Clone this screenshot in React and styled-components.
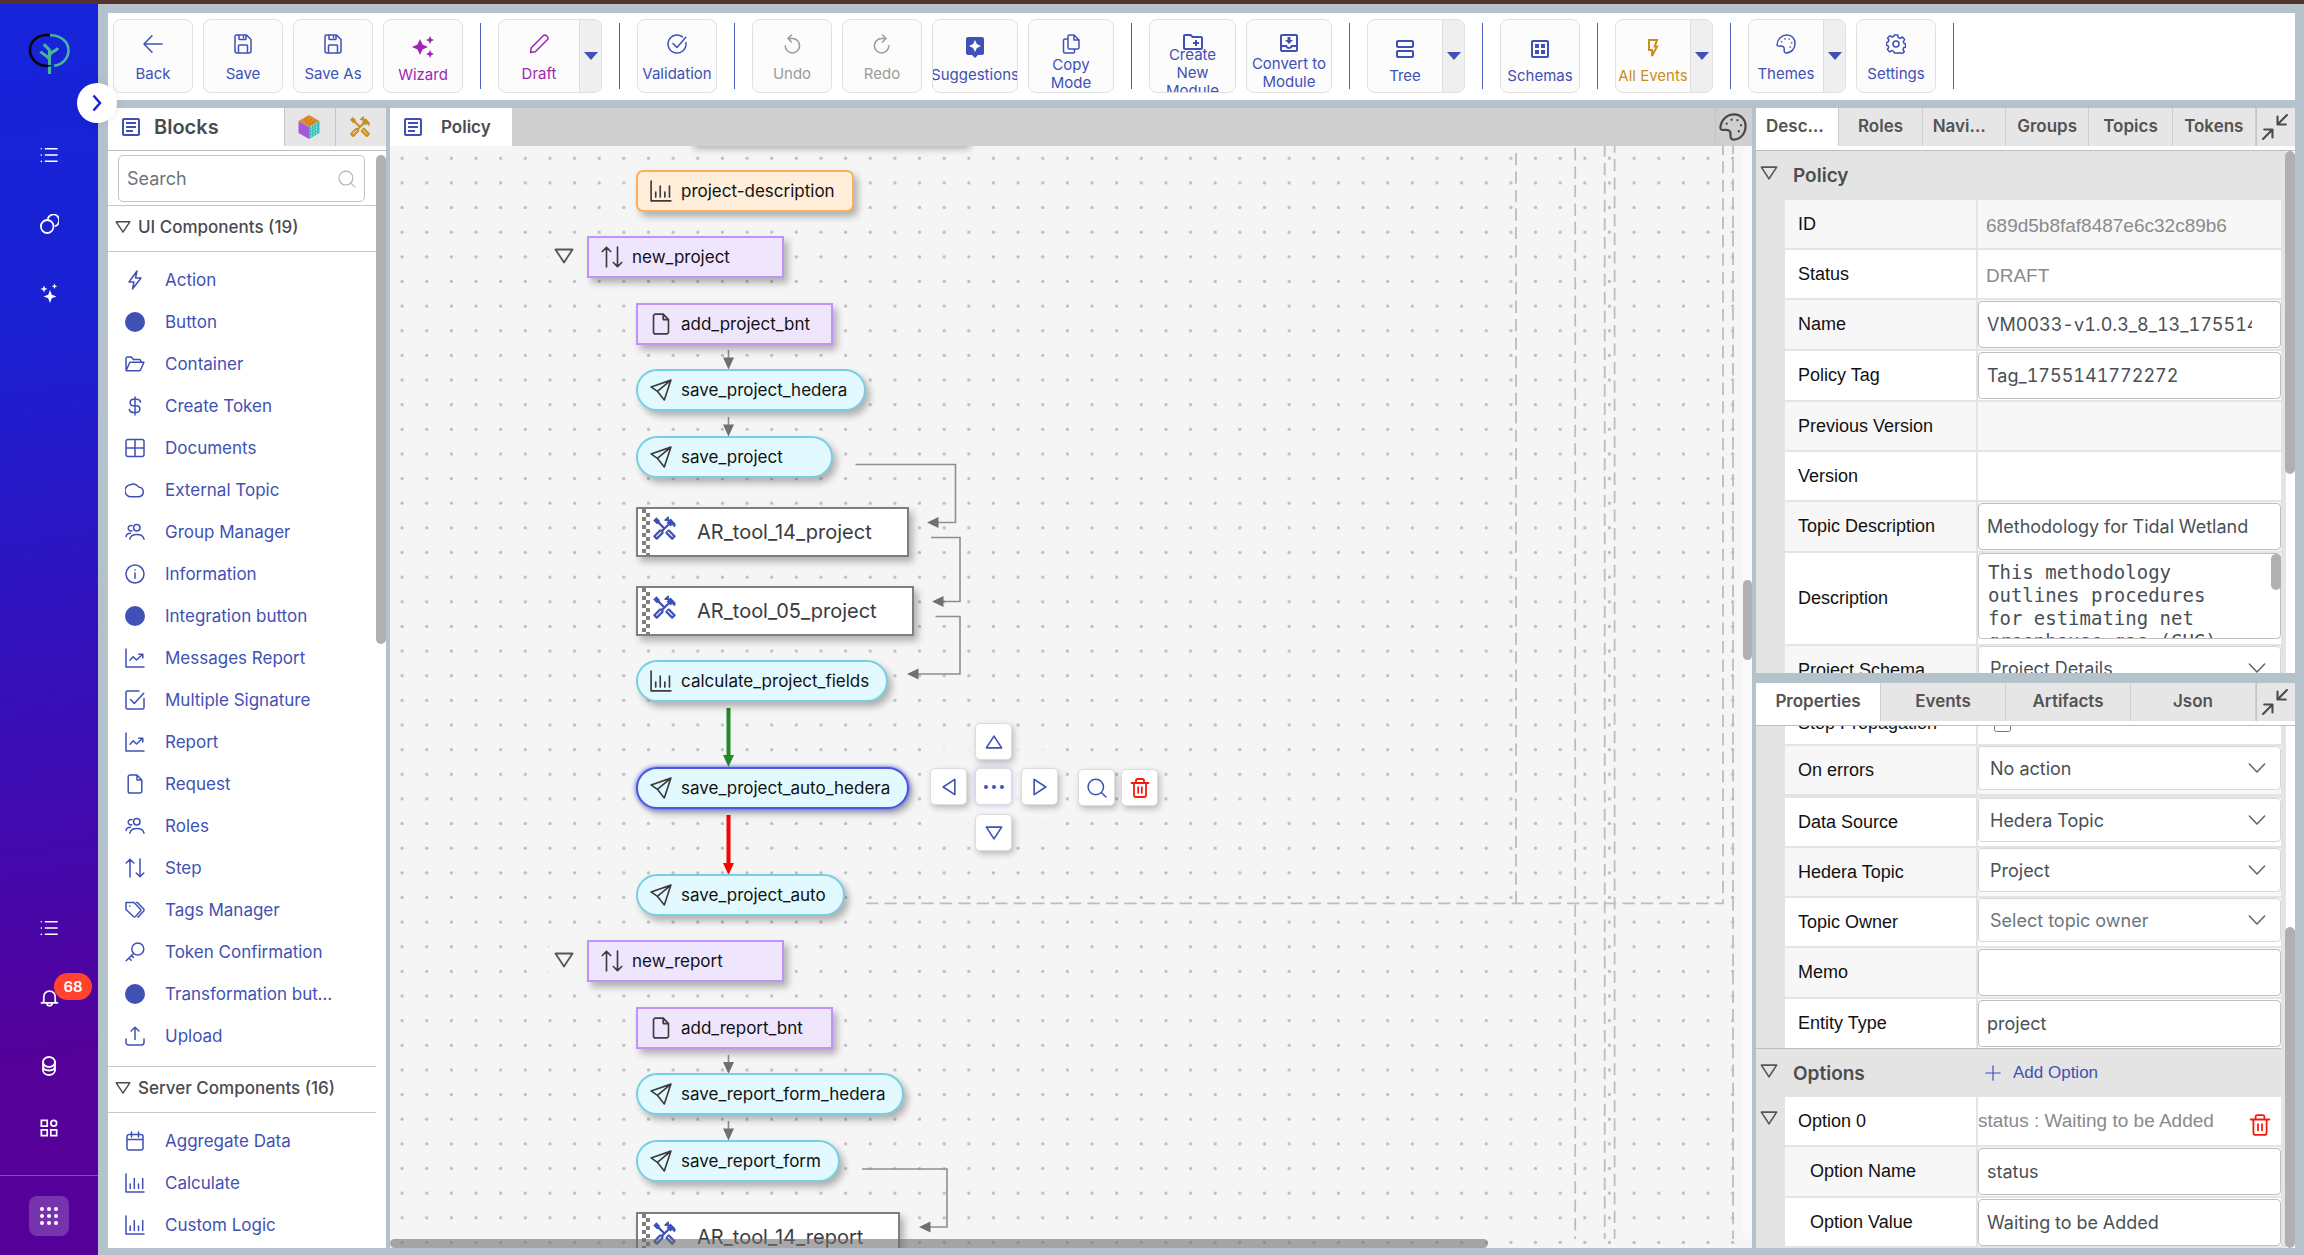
import React from "react"
import styled, { createGlobalStyle, css } from "styled-components"
import {
    MdAssistant,
    MdAutoAwesome,
    MdOutlineArticle,
    MdOutlineCreateNewFolder,
    MdOutlineDataset,
    MdOutlineHandyman,
    MdOutlineMoveToInbox,
    MdOutlineViewAgenda,
} from "react-icons/md"

const INDIGO = "#3f51b5"
const PURPLE = "#9c27b0"
const GOLD = "#c98f1c"
const RED = "#f51a0d"
const FRAME = "#b4c2cb"

const GlobalStyle = createGlobalStyle`
    * {
        box-sizing: border-box;
    }

    body {
        margin: 0;
        font-family: Inter, "Liberation Sans", sans-serif;
        font-size: 18px;
        color: #4a4b4f;
    }

    button,
    input,
    select {
        font-family: inherit;
    }

    button {
        padding: 0;
        border: 0;
        background: none;
        color: inherit;
        cursor: pointer;
    }

    svg {
        flex-shrink: 0;
        display: block;
    }
`

/* ---------- icons ---------- */

const Svg = ({ size = 20, width = 1.5, children, ...rest }) => (
    <svg
        width={size}
        height={size}
        viewBox="0 0 20 20"
        fill="none"
        stroke="currentColor"
        strokeWidth={width}
        strokeLinecap="round"
        strokeLinejoin="round"
        aria-hidden="true"
        {...rest}>
        {children}
    </svg>
)

const paths = {
    back: "M19 10H1.2M9 1.8L1 10l8 8.2",
    save: "M3.500 1h10L18 5.500V17a2 2 0 0 1-2 2H4a2 2 0 0 1-2-2V2.500A1.500 1.500 0 0 1 3.500 1M6 1v4a.6.6 0 0 0 .6.6h5.800a.6.6 0 0 0 .6-.6V1M10.500 2.400v1.400M5.500 19v-7.200a.8.8 0 0 1 .8-.8h7.400a.8.8 0 0 1 .8.8V19",
    pencil: "M1.500 18.500l.8-4.800L14.200 1.700a2.300 2.300 0 0 1 3.300 0l.8.8a2.300 2.300 0 0 1 0 3.300L6.300 17.700z",
    check: "M15.500 2.900A9 9 0 1 0 19 10V8.600M6 9.500l4 4L18.800 3.200",
    undo: "M6.800 4.500h3.700a7.200 7.200 0 1 1-7.300 7.200M9.500 1L6 4.500 9.500 8",
    redo: "M13.200 4.500H9.500a7.200 7.200 0 1 0 7.300 7.200M10.500 1L14 4.500 10.500 8",
    copy: "M13 1H8.500A1.500 1.500 0 0 0 7 2.500v11A1.500 1.500 0 0 0 8.500 15h8a1.500 1.500 0 0 0 1.500-1.500V6zM13 1v5h5M7 5H4a1.500 1.500 0 0 0-1.500 1.500v11A1.500 1.500 0 0 0 4 19h8a1.500 1.500 0 0 0 1.500-1.500V15",
    cog: "M8.300 1h3.400l.5 2.500 2 .9 2.200-1.400 2.300 2.400-1.400 2.200.8 1.900 1.400.3v3.400l-1.700.4-.8 1.900 1.300 2.100-2.400 2.300-2-1.300-2 .8L11.500 19H8.300l-.5-1.600-2-.8-2.100 1.300-2.300-2.400 1.300-2.100-.8-1.900L.5 11.200V8.400l1.600-.5.8-1.900L1.600 4l2.300-2.300L6 3l1.800-.8z",
    bolt: "M12 1L4 12h5l-1.500 7L16 8h-5.500z",
    folder: "M1 16V4.500A1.500 1.500 0 0 1 2.500 3h3.800l2 2.500h6A1.500 1.500 0 0 1 15.800 7v1.200M1.300 16.300L4.500 9a1.300 1.300 0 0 1 1.200-.8h13.200l-3.200 7.500a1.500 1.500 0 0 1-1.400 1H2A1 1 0 0 1 1 16",
    dollar: "M10 1v18M15.500 6.200c-.3-2-2-3-4-3H8.500a3.200 3.200 0 0 0 0 6.600h3a3.300 3.300 0 0 1 0 6.700h-3c-2.200 0-3.800-1-4.200-3",
    table: "M3 1.500h14a2 2 0 0 1 2 2v13a2 2 0 0 1-2 2H3a2 2 0 0 1-2-2v-13a2 2 0 0 1 2-2zM1 10h18M10 1.500v17",
    cloud: "M6.500 16.700A5.500 5.500 0 0 1 5.300 4.800 6 6 0 0 1 13.500 7a4.900 4.900 0 0 1 .8 9.700z",
    users: "M15 5.700a3.200 3.200 0 1 1-6.400 0 3.200 3.200 0 0 1 6.400 0zM4.800 17.200a7.200 5.500 0 0 1 14.200 0M7 3.800a2.700 2.700 0 1 0-.2 5M1 14.500a4.500 4 0 0 1 4.500-3.300",
    info: "M19 10a9 9 0 1 1-18 0 9 9 0 0 1 18 0zM10 9v5.200M10 5.800v.3",
    report: "M1 1v18h18M5 12.300l3.200-3.500L11.500 12l6-5.500M13.800 6.200h4V10",
    multi: "M14 1H2.500A1.500 1.500 0 0 0 1 2.500v15A1.500 1.500 0 0 0 2.500 19h15a1.500 1.500 0 0 0 1.500-1.500V8.500M5.500 9.500l3.800 4L18.700 3.200",
    file: "M12 1H5a1.800 1.800 0 0 0-1.800 1.800v14.400A1.800 1.800 0 0 0 5 19h10a1.800 1.800 0 0 0 1.800-1.800V6zM12 1v5h4.800",
    step: "M5 19V1.200M1.200 5L5 1.200 8.800 5M15 1v17.800M11.200 15l3.800 3.800 3.800-3.800",
    tags: "M1 2.500h8l6.500 6.800a1.500 1.500 0 0 1 0 1.800l-5 5.400a1.500 1.500 0 0 1-2 0L1 9.500zM11.500 2.500h1l6.200 6.600a1.500 1.500 0 0 1 0 1.900l-5.700 6.300M4.800 6v.2",
    key: "M18.800 7a6 6 0 1 1-12 0 6 6 0 0 1 12 0zM8.700 11.200L1.200 18.800M4 16l2.200 2.200M6.500 13.600l1.800 1.800",
    upload: "M10 13.500V1.200M6 5l4-3.800L14 5M1 13v3.500A2.500 2.500 0 0 0 3.500 19h13a2.500 2.500 0 0 0 2.500-2.500V13",
    calendar: "M4 3.500h12a2 2 0 0 1 2 2V17a2 2 0 0 1-2 2H4a2 2 0 0 1-2-2V5.500a2 2 0 0 1 2-2zM2 8.500h16M6.500 1v5M13.500 1v5",
    chart: "M1 1v18h18M5.200 11v4.500M9.300 5.500v10M13.500 11v4.500M17.700 5.500v10",
    send: "M19 1L1 7.200l5.700 4L13 19zM19 1L6.700 11.200v0",
    search: "M16.500 9A7.700 7.700 0 1 1 1.100 9a7.700 7.700 0 0 1 15.400 0zM14.300 14.500L19 19",
    trash: "M1.500 5h17M4 5v12a2 2 0 0 0 2 2h8a2 2 0 0 0 2-2V5M6 5V2.500A1.500 1.500 0 0 1 7.500 1h5A1.500 1.500 0 0 1 14 2.500V5M8.200 9.200v5.600M11.800 9.200v5.600",
    chevron: "M1.500 5.500L10 14.500l8.500-9",
    plus: "M10 1v18M1 10h18",
    bell: "M4 14.500V9.200a6 6 0 0 1 12 0v5.300l2.500 1.200H1.500zM7.300 16a2.700 2.700 0 0 0 5.400 0",
    rings: "M14.500 12.500a6.300 6.500 0 1 1-12.600 0 6.300 6.500 0 0 1 12.600 0zM9 4.200a5.800 6 0 1 1 7.600 7.800",
    compress: "M18.500 1.500l-6.500 6.500M11.800 2.500v5.700h5.900M1.500 18.500l6.500-6.500M2.300 11.800h5.900v5.700",
    palette: "M11 1C5.500 1 1.500 5 1 10.500c0 1.300 1.200 1.800 2.600 1.600 3-.5 5 .6 4.600 3.700-.2 1.800.6 3.300 2.300 3.200C16 18.700 19 14 19 9.200 19 4.500 15.500 1 11 1zM5.500 7.500v.2M9 4.700v.2M13.200 5v.2M15.700 8.700v.2M14.200 13v.2",
}

const Icon = ({ name, ...rest }) => {
    if (name === "circle")
        return (
            <Svg {...rest}>
                <circle cx="10" cy="10" r="10" fill="currentColor" stroke="none" />
            </Svg>
        )
    return (
        <Svg {...rest}>
            <path d={paths[name]} />
            {name === "cog" && <circle cx="10" cy="10" r="3" />}
        </Svg>
    )
}

const Triangle = ({ size = 20, turn = 0 }) => (
    <Svg size={size} width={1.8}>
        <path d="M1.500 3.500h17L10 16.500z" transform={`rotate(${turn} 10 10)`} />
    </Svg>
)

const FlashIcon = ({ size }) => (
    <svg
        width={size}
        height={size}
        viewBox="0 0 24 24"
        fill="none"
        stroke="currentColor"
        strokeWidth="2"
        aria-hidden="true">
        <path d="M8 3h8l-2.300 6.500H16L11 19v-6H8z" />
    </svg>
)

const ListIcon = () => (
    <Svg size={18} width={1.8}>
        <path d="M6 3h13M6 10h13M6 17h13M1.500 3v.1M1.500 10v.1M1.500 17v.1" />
    </Svg>
)

const SparkleIcon = () => (
    <svg width="20" height="20" viewBox="0 0 20 20" fill="#fff" aria-hidden="true">
        <path d="M11 7l1.800 4.700L17.500 13.500l-4.700 1.800L11 20l-1.800-4.700L4.500 13.500l4.700-1.800z" />
        <path d="M5 2.500l1 2.500L8.500 6 6 7 5 9.500 4 7 1.500 6 4 5zM15.500.5l.8 2 2 .8-2 .8-.8 2-.8-2-2-.8 2-.8z" />
    </svg>
)

const DatabaseIcon = () => (
    <Svg size={20} width={1.8}>
        <ellipse cx="10" cy="6" rx="6" ry="5" />
        <path d="M4 6v8c0 3 2.700 5 6 5s6-2 6-5V6M4 10c0 3 2.700 4.500 6 4.500s6-1.500 6-4.500" />
    </Svg>
)

const SquaresIcon = () => (
    <Svg size={18} width={1.9} strokeLinejoin="miter">
        <path d="M1.500 1.500h6.500V8H1.500zM1.500 12h6.500v6.500H1.500zM12 12h6.500v6.500H12z" />
        <circle cx="15.300" cy="4.700" r="3.200" />
    </Svg>
)

const AppsIcon = () => (
    <svg width="18" height="18" viewBox="0 0 18 18" fill="#fff" aria-hidden="true">
        {[2, 9, 16].map(y =>
            [2, 9, 16].map(x => <circle key={`${x}-${y}`} cx={x} cy={y} r="2" />),
        )}
    </svg>
)

const Logo = () => (
    <svg width="42" height="42" viewBox="0 0 42 42" fill="none" aria-hidden="true">
        <path d="M22 2.200C10 1 2 8 2 17s8 17 20 15.800" stroke="#05060c" strokeWidth="2.600" />
        <path
            d="M22 2.200C33 2 40.500 9 40.500 17.500c0 7.500-6 14.200-14.500 15.300"
            stroke="#47b59b"
            strokeWidth="2.600"
        />
        <path
            d="M21.500 32V18c0-3-3.500-3-5.500-7M21.500 27c-1-5-7-5-9-8.500M22 22c1-4 6-3.500 8-7"
            stroke="#47b59b"
            strokeWidth="3"
        />
        <path d="M21.500 33.500V41" stroke="#47b59b" strokeWidth="3.200" />
    </svg>
)

const CubeIcon = () => (
    <svg width="22" height="24" viewBox="0 0 22 24" aria-hidden="true">
        <path d="M11 0l10.500 6L11 12 .5 6z" fill="#e08a2c" />
        <path d="M.5 6L11 12v12L.5 18z" fill="#9f5bdc" />
        <path d="M21.500 6L11 12v12l10.500-6z" fill="#3fc0bd" />
        <path d="M13.500 11v11M16 9.500v11M18.500 8v11" stroke="#8fe3dc" strokeDasharray="2 1" />
        <path d="M6 5.500l5-3M8 7.500l6-3.500M11 9.500l6-3.500" stroke="#c46a10" strokeDasharray="2 1" />
    </svg>
)

/* ---------- frame ---------- */

const Page = styled.div`
    display: flex;
    flex-direction: column;
    height: 100vh;
    overflow: hidden;
    border-top: 4px solid #54332f;
`

const Body = styled.div`
    display: flex;
    flex: 1;
    min-height: 0;
`

const Main = styled.main`
    display: flex;
    flex: 1;
    flex-direction: column;
    gap: 8px;
    min-width: 0;
    padding: 9px 9px 7px 10px;
    background: ${FRAME};
`

const Sidebar = styled.nav`
    position: relative;
    display: flex;
    flex-direction: column;
    align-items: center;
    width: 98px;
    padding-top: 29px;
    color: #fff;
    background: linear-gradient(
        170deg,
        #1624da 0%,
        #1b20d3 26%,
        #4209ae 66%,
        #540099 84%
    );
`

const SideItems = styled.div`
    display: flex;
    flex-direction: column;
    align-items: center;
    gap: ${props => props.$gap}px;
    margin-top: ${props => props.$top};
`

const SideButton = styled.button`
    position: relative;
    display: grid;
    place-items: center;
    width: 40px;
    height: ${props => (props.$tall ? 34 : 20)}px;
`

const FooterGap = styled.div`
    height: 37px;
`

const SideFooter = styled.div`
    display: flex;
    justify-content: center;
    width: 100%;
    height: 80px;
    padding-top: 20px;
    border-top: 1px solid rgba(255, 255, 255, 0.3);
`

const AppsButton = styled.button`
    display: grid;
    place-items: center;
    width: 40px;
    height: 40px;
    border-radius: 8px;
    background: rgba(255, 255, 255, 0.2);
`

const Badge = styled.span`
    position: absolute;
    left: 25px;
    bottom: 14px;
    width: 38px;
    border-radius: 14px;
    background: #ff432e;
    font-size: 15px;
    font-weight: 600;
    line-height: 27px;
    text-align: center;
`

const Expander = styled.button`
    position: absolute;
    z-index: 2;
    top: 79px;
    left: 77px;
    display: grid;
    place-items: center;
    width: 40px;
    height: 40px;
    border-radius: 50%;
    background: #fff;
    color: #1a24d8;
    box-shadow: 0 0 12px rgba(0, 0, 0, 0.08);
`

/* ---------- toolbar ---------- */

const Bar = styled.header`
    display: flex;
    align-items: flex-start;
    gap: 10px;
    height: 87px;
    padding: 6px 5px;
    background: #fff;
`

const Divider = styled.i`
    width: 1px;
    height: 66px;
    margin: 4px 7px 0;
    background: #5063c4;
`

const toolFrame = css`
    height: 74px;
    border: 1px solid #e0e0e0;
    border-radius: 8px;
    background: #fcfcfc;
    overflow: hidden;
`

const ToolButton = styled.button`
    ${props => !props.$bare && toolFrame}
    display: flex;
    flex-direction: column;
    align-items: center;
    width: ${props => props.$width || 80}px;
    padding-top: ${props => props.$top}px;
    color: ${props => props.$color || INDIGO};
    font-size: 15px;
    line-height: 18px;

    svg {
        margin-bottom: ${props => props.$gap}px;
    }
`

const Split = styled.div`
    ${toolFrame}
    display: flex;
    width: ${props => props.$width}px;

    ${ToolButton} {
        flex: 1;
    }
`

const Caret = styled.button`
    display: grid;
    place-items: center;
    width: 22px;
    border-left: 1px solid #dcdcdc;
    background: #efefef;
    color: ${INDIGO};
`

const ToolLabel = styled.span`
    max-width: ${props => (props.$narrow ? "60px" : "none")};
    white-space: ${props => (props.$oneLine ? "nowrap" : "normal")};
    text-align: center;
`

// pi: thin 20px icons, md: material 24px icons, low: material icons set a bit lower
const spots = {
    pi: { top: 14, gap: 11, size: 20 },
    piTall: { top: 14, gap: 2, size: 20 },
    md: { top: 15, gap: 7, size: 24 },
    low: { top: 17, gap: 6, size: 24 },
    two: { top: 11, gap: 0, size: 24 },
    three: { top: 10, gap: -8, size: 24 },
}

const tools = [
    [
        { label: "Back", icon: "back" },
        { label: "Save", icon: "save" },
        { label: "Save As", icon: "save" },
        { label: "Wizard", Md: MdAutoAwesome, spot: "md", color: PURPLE },
    ],
    [{ label: "Draft", icon: "pencil", color: PURPLE, split: 104 }],
    [{ label: "Validation", icon: "check" }],
    [
        { label: "Undo", icon: "undo", color: "#9b9b9b", disabled: true },
        { label: "Redo", icon: "redo", color: "#9b9b9b", disabled: true },
        { label: "Suggestions", Md: MdAssistant, spot: "md", width: 86 },
        { label: "Copy Mode", icon: "copy", spot: "piTall", width: 86, narrow: true },
    ],
    [
        {
            label: "Create New Module",
            Md: MdOutlineCreateNewFolder,
            spot: "three",
            width: 87,
            narrow: true,
        },
        {
            label: "Convert to Module",
            Md: MdOutlineMoveToInbox,
            spot: "two",
            width: 86,
        },
    ],
    [{ label: "Tree", Md: MdOutlineViewAgenda, spot: "low", split: 98 }],
    [{ label: "Schemas", Md: MdOutlineDataset, spot: "low" }],
    [{ label: "All Events", Md: FlashIcon, spot: "low", color: GOLD, split: 98 }],
    [
        { label: "Themes", icon: "palette", split: 98 },
        { label: "Settings", icon: "cog" },
    ],
]

const Tool = ({ tool }) => {
    const spot = spots[tool.spot || "pi"]
    const button = (
        <ToolButton
            $bare={Boolean(tool.split)}
            $width={tool.width}
            $top={spot.top}
            $gap={spot.gap}
            $color={tool.color}
            disabled={tool.disabled}>
            {tool.Md ? <tool.Md size={spot.size} /> : <Icon name={tool.icon} size={spot.size} />}
            <ToolLabel $narrow={tool.narrow} $oneLine={Boolean(tool.split)}>
                {tool.label}
            </ToolLabel>
        </ToolButton>
    )

    if (!tool.split) return button

    return (
        <Split $width={tool.split}>
            {button}
            <Caret aria-label={`${tool.label} menu`}>
                <svg width="14" height="8" viewBox="0 0 14 8" fill="currentColor">
                    <path d="M0 0h14L7 8z" />
                </svg>
            </Caret>
        </Split>
    )
}

/* ---------- panels ---------- */

const Workspace = styled.div`
    display: grid;
    grid-template-columns: 278px minmax(0, 1fr) 539px;
    gap: 4px;
    flex: 1;
    min-height: 0;
`

const Panel = styled.section`
    position: relative;
    display: flex;
    flex-direction: column;
    flex: 1;
    min-width: 0;
    min-height: 0;
    background: #fff;
    overflow: hidden;
`

const Tabs = styled.div`
    display: flex;
    flex-shrink: 0;
    height: 38px;
    background: ${props => props.$bg || "#e6e6e6"};
`

const Tab = styled.button`
    flex: 1 1 0;
    min-width: 0;
    padding: 0 10px 2px;
    border-right: 1px solid #cdcdcd;
    background: ${props => (props.$active ? "#fff" : "transparent")};
    color: #535353;
    font-size: 17px;
    font-weight: 600;
    white-space: nowrap;
    overflow: hidden;
    text-overflow: ellipsis;
`

const IconTab = styled.button`
    display: grid;
    place-items: center;
    width: ${props => props.$width}px;
    padding-right: 2px;
    border-left: 1px solid #c4c4c4;
    color: ${props => props.$color || "#4a4a4a"};
`

const TitleTab = styled.h2`
    display: flex;
    align-items: center;
    gap: ${props => props.$gap}px;
    flex: ${props => props.$flex || "none"};
    margin: 0;
    padding: 0 21px 0 11px;
    background: #fff;
    font-size: ${props => props.$size}px;
    font-weight: 600;

    svg {
        color: ${INDIGO};
    }
`

const TabsLine = styled.div`
    flex-shrink: 0;
    height: 5px;
    border-bottom: 1px solid #bdbdbd;
    background: #fff;
`

const Thumb = styled.i`
    position: absolute;
    right: 0;
    top: ${props => props.$top};
    bottom: ${props => props.$bottom || "auto"};
    width: ${props => props.$width || 10}px;
    height: ${props => props.$height || "auto"};
    border-radius: 5px;
    background: #b0b0b0;
`

const SearchBox = styled.label`
    display: flex;
    align-items: center;
    flex-shrink: 0;
    height: 47px;
    margin: 4px 21px 3px 10px;
    padding: 0 8px;
    border: 1px solid #c4c4c4;
    border-radius: 5px;
    color: #b3b3b3;

    input {
        flex: 1;
        min-width: 0;
        padding: 0;
        border: 0;
        outline: 0;
        font-size: 18px;
    }

    input::placeholder {
        color: #6c757d;
        opacity: 1;
    }
`

const GroupTitle = styled.h3`
    display: flex;
    align-items: center;
    flex-shrink: 0;
    gap: 7px;
    height: 47px;
    margin: 0 10px 0 0;
    padding: 0 0 3px 7px;
    border-top: 1px solid #c8c8c8;
    border-bottom: 1px solid #c8c8c8;
    font-size: 17px;
    font-weight: 500;
`

const BlockList = styled.ul`
    flex-shrink: 0;
    margin: 0;
    padding: 7px 52px 9px 17px;
    list-style: none;
`

const BlockItem = styled.li`
    display: flex;
    align-items: center;
    gap: 20px;
    height: 42px;
    color: ${INDIGO};
    font-size: 17px;

    span {
        overflow: hidden;
        text-overflow: ellipsis;
        white-space: nowrap;
    }
`

const uiBlocks = [
    ["bolt", "Action"],
    ["circle", "Button"],
    ["folder", "Container"],
    ["dollar", "Create Token"],
    ["table", "Documents"],
    ["cloud", "External Topic"],
    ["users", "Group Manager"],
    ["info", "Information"],
    ["circle", "Integration button"],
    ["report", "Messages Report"],
    ["multi", "Multiple Signature"],
    ["report", "Report"],
    ["file", "Request"],
    ["users", "Roles"],
    ["step", "Step"],
    ["tags", "Tags Manager"],
    ["key", "Token Confirmation"],
    ["circle", "Transformation button"],
    ["upload", "Upload"],
]

const serverBlocks = [
    ["calendar", "Aggregate Data"],
    ["chart", "Calculate"],
    ["chart", "Custom Logic"],
]

const BlockGroup = ({ title, blocks }) => (
    <>
        <GroupTitle>
            <Triangle size={16} />
            {title}
        </GroupTitle>
        <BlockList>
            {blocks.map(([icon, label]) => (
                <BlockItem key={label}>
                    <Icon name={icon} size={20} />
                    <span>{label}</span>
                </BlockItem>
            ))}
        </BlockList>
    </>
)

const BlocksPanel = () => (
    <Panel>
        <Tabs>
            <TitleTab $flex="1" $gap={11} $size={20}>
                <MdOutlineArticle size={24} />
                Blocks
            </TitleTab>
            <IconTab $width={51} aria-label="Modules">
                <CubeIcon />
            </IconTab>
            <IconTab $width={51} $color={GOLD} aria-label="Tools">
                <MdOutlineHandyman size={24} />
            </IconTab>
        </Tabs>
        <TabsLine />
        <SearchBox>
            <input type="text" placeholder="Search" aria-label="Search" />
            <Icon name="search" size={18} width={1.3} />
        </SearchBox>
        <BlockGroup title="UI Components (19)" blocks={uiBlocks} />
        <BlockGroup title="Server Components (16)" blocks={serverBlocks} />
        <Thumb $top="47px" $height="489px" />
    </Panel>
)

/* ---------- canvas ---------- */

const Spacer = styled.div`
    flex: 1;
`

const Canvas = styled.div`
    position: relative;
    flex: 1;
    background: #f5f5f5;
    overflow: hidden;
`

const Drawing = styled.svg`
    position: absolute;
    inset: 0;
    width: 100%;
    height: 100%;
`

const kinds = {
    action: css`
        border-color: #78cfe4;
        border-radius: 21px;
        background: #e2f9ff;
    `,
    step: css`
        border-color: #c093f8;
        background: #efe5fd;
    `,
    info: css`
        border-color: #fab05c;
        border-radius: 7px;
        background: #ffeeda;
    `,
    tool: css`
        gap: 19px;
        height: 50px;
        padding: 0 35px 0 13px;
        border-color: #7f7f7f;
        background: #fff;
        color: #3b3b3e;
        font-size: 20px;
    `,
}

const Node = styled.div.attrs(props => ({
    style: { left: props.$x, top: props.$y },
}))`
    position: absolute;
    display: flex;
    align-items: center;
    gap: 9px;
    min-width: 197px;
    height: 42px;
    padding: 0 17px 0 12px;
    border: 2px solid;
    color: #111;
    font-size: 17px;
    white-space: nowrap;
    box-shadow: 4px 5px 7px rgba(0, 0, 0, 0.28);
    ${props => kinds[props.$kind]}
    ${props =>
        props.$selected &&
        css`
            border-color: #4b57dd;
            box-shadow:
                0 0 5px #4b57dd,
                4px 5px 7px rgba(0, 0, 0, 0.28);
        `}

    > svg {
        color: ${props => (props.$kind === "tool" ? INDIGO : "#3c3c3c")};
        margin-bottom: ${props => (props.$kind === "tool" ? 8 : 0)}px;
    }
`

const Checker = styled.i`
    position: absolute;
    top: 0;
    bottom: 0;
    left: 4px;
    width: 8px;
    background: conic-gradient(#fff 25%, #808080 0 50%, #fff 0 75%, #808080 0) 0 0 / 8px 8px;
`

const Fold = styled.button.attrs(props => ({
    style: { left: props.$x, top: props.$y },
}))`
    position: absolute;
    display: grid;
    place-items: center;
    width: 30px;
    height: 30px;
    background: #f5f5f5;
    color: #555;
`

const Halo = styled.i`
    position: absolute;
    left: 540px;
    top: 577px;
    width: 128px;
    height: 128px;
    border-radius: 50%;
    background: rgba(245, 245, 245, 0.85);
`

const PadButton = styled.button.attrs(props => ({
    style: { left: props.$x, top: props.$y },
}))`
    position: absolute;
    display: grid;
    place-items: center;
    width: 37px;
    height: 37px;
    border: 1px solid #dcdcdc;
    border-radius: 5px;
    background: #fff;
    color: ${props => props.$color || INDIGO};
    box-shadow: ${props =>
        props.$glow ? "0 0 5px rgba(63, 81, 220, 0.35)" : "2px 3px 6px rgba(0, 0, 0, 0.24)"};
`

const Peek = styled.i`
    position: absolute;
    top: -44px;
    left: 300px;
    width: 276px;
    height: 42px;
    background: #fff;
    box-shadow: 4px 5px 7px rgba(0, 0, 0, 0.28);
`

const HScroll = styled.i`
    position: absolute;
    left: 0;
    right: 264px;
    bottom: 0;
    height: 9px;
    border-radius: 5px;
    background: rgba(110, 110, 110, 0.6);
`

const VScroll = styled.i`
    position: absolute;
    top: 0;
    right: 0;
    bottom: 9px;
    width: 9px;
    background: #f9f9f9;
`

const nodes = [
    { x: 246, y: 24, kind: "info", icon: "chart", label: "project-description" },
    { x: 197, y: 90, kind: "step", icon: "step", label: "new_project" },
    { x: 246, y: 157, kind: "step", icon: "file", label: "add_project_bnt" },
    { x: 246, y: 223, kind: "action", icon: "send", label: "save_project_hedera" },
    { x: 246, y: 290, kind: "action", icon: "send", label: "save_project" },
    { x: 246, y: 361, kind: "tool", label: "AR_tool_14_project" },
    { x: 246, y: 440, kind: "tool", label: "AR_tool_05_project" },
    { x: 246, y: 514, kind: "action", icon: "chart", label: "calculate_project_fields" },
    {
        x: 246,
        y: 621,
        kind: "action",
        icon: "send",
        label: "save_project_auto_hedera",
        selected: true,
    },
    { x: 246, y: 728, kind: "action", icon: "send", label: "save_project_auto" },
    { x: 197, y: 794, kind: "step", icon: "step", label: "new_report" },
    { x: 246, y: 861, kind: "step", icon: "file", label: "add_report_bnt" },
    { x: 246, y: 927, kind: "action", icon: "send", label: "save_report_form_hedera" },
    { x: 246, y: 994, kind: "action", icon: "send", label: "save_report_form" },
    { x: 246, y: 1066, kind: "tool", label: "AR_tool_14_report" },
]

const Arrows = () => (
    <Drawing aria-hidden="true">
        <defs>
            <pattern
                id="dots"
                x="-0.2"
                y="0"
                width="24.640"
                height="24.640"
                patternUnits="userSpaceOnUse">
                <circle cx="12.300" cy="12.300" r="1.600" fill="#bcbcbc" />
            </pattern>
        </defs>
        <rect width="100%" height="100%" fill="url(#dots)" />
        <g fill="none" stroke="#bdbdbd" strokeWidth="1.800" strokeDasharray="12.300 6.150">
            <path d="M476 757.300H1333V-10" />
            <path d="M1126 757.300V6" />
            <path d="M1185.200 -16.400V1093" />
            <path d="M1214.700 -1.500V1093" />
            <path d="M1224.600 -5.500V1093" />
            <path d="M1343 -4.100V1093" />
        </g>
        <g fill="none" stroke="#8f8f8f" strokeWidth="1.600">
            <path d="M465.500 318.500h100v58H547" />
            <path d="M541 391.500h29v64H552" />
            <path d="M545.500 470.500h24.500V528H527" />
            <path d="M472 1023h85v58H539" />
            <path d="M338.500 204v10M338.500 271v10M338.500 909v10M338.500 975v10" />
        </g>
        <g fill="#707070">
            <path d="M537 376.500l11.500-5.500v11zM542 455.500l11.500-5.500v11zM517 528l11.500-5.500v11zM529 1081l11.500-5.500v11z" />
            <path d="M338.500 223.500L333 211.500h11zM338.500 290.500L333 278.500h11zM338.500 928L333 916h11zM338.500 994.500L333 982.500h11z" />
        </g>
        <path d="M338.500 562v50" stroke="#218a22" strokeWidth="4" />
        <path d="M338.500 621L333 609h11z" fill="#218a22" />
        <path d="M338.500 669v50" stroke="#f80500" strokeWidth="4" />
        <path d="M338.500 729L333 717h11z" fill="#f80500" />
    </Drawing>
)

const PolicyCanvas = () => (
    <Panel>
        <Tabs $bg="#cfcfcf">
            <TitleTab $gap={16} $size={17}>
                <MdOutlineArticle size={24} />
                Policy
            </TitleTab>
            <Spacer />
            <IconTab $width={37} aria-label="Theme">
                <Icon name="palette" size={28} width={1.6} />
            </IconTab>
        </Tabs>
        <Canvas>
            <Arrows />
            <Peek />
            {nodes.map(node => (
                <Node
                    key={node.label}
                    $x={node.x}
                    $y={node.y}
                    $kind={node.kind}
                    $selected={node.selected}>
                    {node.kind === "tool" ? (
                        <>
                            <Checker />
                            <MdOutlineHandyman size={27} />
                        </>
                    ) : (
                        <Icon name={node.icon} size={22} />
                    )}
                    {node.label}
                </Node>
            ))}
            <Fold $x={159} $y={95} aria-label="Collapse new_project">
                <Triangle size={20} />
            </Fold>
            <Fold $x={159} $y={799} aria-label="Collapse new_report">
                <Triangle size={20} />
            </Fold>
            <Halo />
            <PadButton $x={585} $y={577} aria-label="Move up">
                <Triangle size={18} turn={180} />
            </PadButton>
            <PadButton $x={540} $y={622} aria-label="Move left">
                <Triangle size={18} turn={90} />
            </PadButton>
            <PadButton $x={585} $y={622} $glow aria-label="More">
                <svg width="20" height="4" viewBox="0 0 20 4" fill="currentColor">
                    <circle cx="2" cy="2" r="2" />
                    <circle cx="10" cy="2" r="2" />
                    <circle cx="18" cy="2" r="2" />
                </svg>
            </PadButton>
            <PadButton $x={631} $y={622} aria-label="Move right">
                <Triangle size={18} turn={-90} />
            </PadButton>
            <PadButton $x={585} $y={668} aria-label="Move down">
                <Triangle size={18} />
            </PadButton>
            <PadButton $x={688} $y={623} aria-label="Find">
                <Icon name="search" size={20} />
            </PadButton>
            <PadButton $x={731} $y={623} $color={RED} aria-label="Delete">
                <Icon name="trash" size={20} width={1.8} />
            </PadButton>
            <VScroll>
                <Thumb $top="434px" $height="80px" $width={9} />
            </VScroll>
            <HScroll />
        </Canvas>
    </Panel>
)

/* ---------- property panels ---------- */

const Side = styled.div`
    display: flex;
    flex-direction: column;
    gap: 10px;
    min-height: 0;
`

const Scroller = styled.div`
    position: relative;
    display: flex;
    flex: 1;
    flex-direction: column;
    min-height: 0;
`

const Rows = styled.div`
    display: flex;
    flex: 1;
    flex-direction: column;
    justify-content: ${props => (props.$end ? "flex-end" : "flex-start")};
    gap: 2px;
    min-height: 0;
    margin-right: 9px;
    padding: 0 5px ${props => (props.$end ? 2 : 0)}px 29px;
    background: #e4e4e4;
    overflow: hidden;
    font-family: "Liberation Sans", Arial, sans-serif;
`

const PropRow = styled.div`
    display: grid;
    grid-template-columns: 191px minmax(0, 1fr);
    gap: 2px;
    flex-shrink: 0;
    height: ${props => props.$height || 48}px;
    margin-bottom: ${props => (props.$loose ? 2 : 0)}px;

    > * {
        background: ${props => (props.$odd ? "#f7f7f7" : "#fff")};
    }
`

const PropLabel = styled.label`
    display: flex;
    align-items: center;
    padding-left: ${props => (props.$deep ? 25 : 13)}px;
    color: #111;
    font-size: 18px;
`

const Cell = styled.div`
    position: relative;
    display: flex;
    align-items: center;
    padding: ${props => (props.$text ? "4px 0 0 8px" : 0)};
    color: #8a8a8a;
    font-size: 19px;
    white-space: nowrap;

    > button {
        margin: 8px 10px 0 auto;
        color: ${RED};
    }
`

const field = css`
    width: 100%;
    border: 1px solid #bfbfbf;
    border-radius: 4px;
    background: #fff;
    color: #495057;
    font-size: 18px;
`

const TextInput = styled.input`
    ${field}
    height: 47px;
    padding: 0 28px 0 8px;
    font-family: Inter, "Liberation Sans", sans-serif;
    font-variant-numeric: tabular-nums;
`

const TextBox = styled.textarea`
    ${field}
    align-self: flex-start;
    display: block;
    height: 86px;
    padding: 7px 44px 0 9px;
    font-family: "DejaVu Sans Mono", monospace;
    font-size: 19px;
    line-height: 23px;
    resize: none;
    overflow: hidden;
`

const SelectBox = styled.select`
    ${field}
    align-self: flex-start;
    height: 44px;
    padding: 0 40px 0 11px;
    border-color: #d3d7db;
    appearance: none;
    font-family: Inter, "Liberation Sans", sans-serif;
    color: ${props => (props.$empty ? "#6c757d" : "#495057")};

    + svg {
        position: absolute;
        top: 13px;
        right: 15px;
        color: #5d666e;
        pointer-events: none;
    }
`

const Tick = styled.input`
    width: 17px;
    height: 17px;
    margin: 0 0 0 16px;
`

const Section = styled.h3`
    position: relative;
    display: grid;
    grid-template-columns: 221px 1fr;
    align-items: center;
    flex-shrink: 0;
    height: 49px;
    margin: ${props => (props.$lined ? -2 : 0)}px 0 -2px -29px;
    padding-left: 37px;
    border-top: ${props => (props.$lined ? "1px solid #bcbcbc" : 0)};
    color: #4d4d4d;
    font-family: Inter, "Liberation Sans", sans-serif;
    font-size: 19px;
    font-weight: 600;

    button {
        display: flex;
        align-items: center;
        gap: 12px;
        margin-left: -29px;
        color: ${INDIGO};
        font-family: "Liberation Sans", Arial, sans-serif;
        font-size: 17px;
    }
`

const Marker = styled.i`
    position: absolute;
    left: 4px;
    top: ${props => props.$top}px;
    color: #555;
`

const Prop = ({ label, id, odd, deep, height, loose, children }) => (
    <PropRow $odd={odd} $height={height} $loose={loose}>
        <PropLabel htmlFor={id} $deep={deep}>
            {label}
        </PropLabel>
        {children}
    </PropRow>
)

const InputRow = ({ value = "", height = 49, ...rest }) => (
    <Prop {...rest} height={height}>
        <Cell>
            <TextInput id={rest.id} type="text" defaultValue={value} />
        </Cell>
    </Prop>
)

const SelectRow = ({ value, empty, ...rest }) => (
    <Prop {...rest}>
        <Cell>
            <SelectBox id={rest.id} $empty={empty} defaultValue={value}>
                <option>{value}</option>
            </SelectBox>
            <Icon name="chevron" size={18} width={1.7} />
        </Cell>
    </Prop>
)

const AREA_TEXT =
    "This methodology outlines procedures for estimating net greenhouse gas (GHG)"

const PanelTabs = ({ names, label }) => (
    <Tabs>
        {names.map((name, index) => (
            <Tab key={name} $active={index === 0}>
                {name}
            </Tab>
        ))}
        <IconTab $width={39} aria-label={label}>
            <Icon name="compress" size={28} width={1.5} />
        </IconTab>
    </Tabs>
)

const DescriptionPanel = () => (
    <Panel>
        <PanelTabs
            names={["Description", "Roles", "Navigation", "Groups", "Topics", "Tokens"]}
            label="Collapse description"
        />
        <TabsLine />
        <Scroller>
            <Rows>
                <Section>
                    Policy
                    <Marker $top={13}>
                        <Triangle size={18} />
                    </Marker>
                </Section>
                <Prop label="ID" odd>
                    <Cell $text>689d5b8faf8487e6c32c89b6</Cell>
                </Prop>
                <Prop label="Status">
                    <Cell $text>DRAFT</Cell>
                </Prop>
                <InputRow label="Name" id="name" value="VM0033-v1.0.3_8_13_1755143772" odd />
                <InputRow label="Policy Tag" id="tag" value="Tag_1755141772272" />
                <Prop label="Previous Version" odd>
                    <Cell />
                </Prop>
                <Prop label="Version">
                    <Cell />
                </Prop>
                <InputRow
                    label="Topic Description"
                    id="topic"
                    value="Methodology for Tidal Wetland and Seagrass Restoration"
                    odd
                />
                <Prop label="Description" id="description" height={91}>
                    <Cell>
                        <TextBox id="description" defaultValue={AREA_TEXT} />
                        <Thumb $top="1px" $height="36px" />
                    </Cell>
                </Prop>
                <SelectRow
                    label="Project Schema"
                    id="schema"
                    value="Project Details"
                    odd
                />
            </Rows>
            <Thumb $top="0" $height="323px" />
        </Scroller>
    </Panel>
)

const PropertiesPanel = () => (
    <Panel>
        <PanelTabs
            names={["Properties", "Events", "Artifacts", "Json"]}
            label="Collapse properties"
        />
        <TabsLine />
        <Scroller>
            <Rows $end>
                <Prop label="Stop Propagation" id="stop" height={42}>
                    <Cell>
                        <Tick id="stop" type="checkbox" />
                    </Cell>
                </Prop>
                <SelectRow label="On errors" id="errors" value="No action" odd loose />
                <SelectRow label="Data Source" id="source" value="Hedera Topic" />
                <SelectRow label="Hedera Topic" id="hedera" value="Project" odd />
                <SelectRow label="Topic Owner" id="owner" value="Select topic owner" empty />
                <InputRow label="Memo" id="memo" odd />
                <InputRow label="Entity Type" id="entity" value="project" />
                <Section $lined>
                    Options
                    <button>
                        <Icon name="plus" size={16} />
                        Add Option
                    </button>
                    <Marker $top={13}>
                        <Triangle size={18} />
                    </Marker>
                    <Marker $top={60}>
                        <Triangle size={18} />
                    </Marker>
                </Section>
                <Prop label="Option 0">
                    <Cell>
                        status : Waiting to be Added
                        <button aria-label="Delete option">
                            <Icon name="trash" size={22} width={1.6} />
                        </button>
                    </Cell>
                </Prop>
                <InputRow label="Option Name" id="option-name" value="status" odd deep />
                <InputRow
                    label="Option Value"
                    id="option-value"
                    value="Waiting to be Added"
                    height={48}
                    deep
                />
            </Rows>
            <Thumb $top="201px" $bottom="0" />
        </Scroller>
    </Panel>
)

const SideNav = () => (
    <Sidebar>
        <Logo />
        <Expander aria-label="Expand menu">
            <svg
                width="10"
                height="18"
                viewBox="0 0 10 18"
                fill="none"
                stroke="currentColor"
                strokeWidth="2.500">
                <path d="M1.500 1.500L8 9l-6.500 7.500" />
            </svg>
        </Expander>
        <SideItems $top="70px" $gap={49}>
            <SideButton aria-label="Policies">
                <ListIcon />
            </SideButton>
            <SideButton aria-label="Tokens">
                <Icon name="rings" width={1.8} />
            </SideButton>
            <SideButton aria-label="Suggestions">
                <SparkleIcon />
            </SideButton>
        </SideItems>
        <SideItems $top="auto" $gap={42}>
            <SideButton aria-label="Logs">
                <ListIcon />
            </SideButton>
            <SideButton $tall aria-label="Notifications">
                <Icon name="bell" size={19} width={1.8} />
                <Badge>68</Badge>
            </SideButton>
            <SideButton aria-label="Storage">
                <DatabaseIcon />
            </SideButton>
            <SideButton aria-label="Modules">
                <SquaresIcon />
            </SideButton>
        </SideItems>
        <FooterGap />
        <SideFooter>
            <AppsButton aria-label="Applications">
                <AppsIcon />
            </AppsButton>
        </SideFooter>
    </Sidebar>
)

const App = () => (
    <>
        <GlobalStyle />
        <Page>
            <Body>
                <SideNav />
                <Main>
                    <Bar>
                        {tools.map(group => (
                            <React.Fragment key={group[0].label}>
                                {group.map(tool => (
                                    <Tool key={tool.label} tool={tool} />
                                ))}
                                <Divider />
                            </React.Fragment>
                        ))}
                    </Bar>
                    <Workspace>
                        <BlocksPanel />
                        <PolicyCanvas />
                        <Side>
                            <DescriptionPanel />
                            <PropertiesPanel />
                        </Side>
                    </Workspace>
                </Main>
            </Body>
        </Page>
    </>
)

export default App
